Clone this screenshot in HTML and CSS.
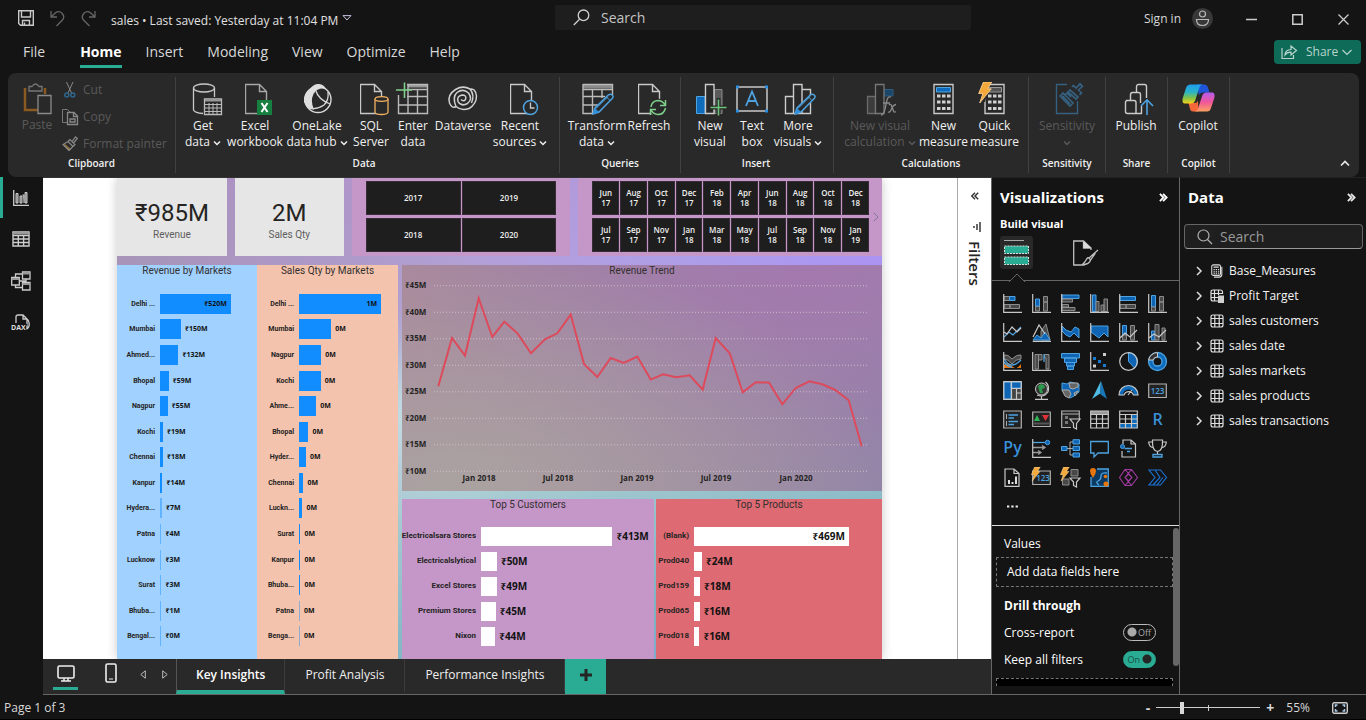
FILE: index.html
```html
<!DOCTYPE html>
<html lang="en">
<head>
<meta charset="utf-8">
<title>sales - Power BI Desktop</title>
<link rel="stylesheet" href="styles.css">
</head>
<body>
<svg class="defs" aria-hidden="true">
  <symbol id="chev" viewBox="0 0 8 6"><path d="M1 1.500 4 4.500 7 1.500" fill="none" stroke="currentColor" stroke-width="1.500"/></symbol>
  <symbol id="page" viewBox="0 0 32 32"><path d="M.5 1.500H14.500L21.500 8.500V30.500H.5ZM14.500 1.500V8.500H21.500" fill="none" stroke="#c8c8c8" stroke-width="1.400"/></symbol>
  <symbol id="pencil" viewBox="0 0 22 22"><path d="M1 21 3 15 16.500 1.800Q18.500 .5 20.200 2T20.200 5.500L7 19Z" fill="#292929" stroke="#4ea3e0" stroke-width="1.500"/><path d="M1 21 3 15 7 19Z" fill="#2e8fe0"/><path d="M14.500 4 18 7.500M4 15.500 16 3.500" stroke="#4ea3e0" fill="none"/></symbol>
  <symbol id="tbl" viewBox="0 0 14 14"><path d="M1 3Q1 1 3 1H11Q13 1 13 3V11Q13 13 11 13H3Q1 13 1 11ZM1 4.500H13M1 9.500H13M4.800 1V13M9.200 1V13" fill="none" stroke="#e0e0e0" stroke-width="1.200"/></symbol>
  <symbol id="dbl" viewBox="0 0 10 10"><path d="M1 1 5 5 1 9M4.500 1 8.500 5 4.500 9" fill="none" stroke="currentColor" stroke-width="2"/></symbol>
  <symbol id="bolt" viewBox="0 0 14 20"><path d="M5 0H13L9 6.500H12.500L1.500 20 4.500 11H.5Z" fill="#f5a83a" stroke="#ffd79a" stroke-width=".8"/></symbol>
</svg>

<header class="titlebar">
  <div class="quick">
    <button class="ic" aria-label="Save"><svg width="16" height="16" viewBox="0 0 16 16"><path d="M.7 .7H15.300V15.300H2.500L.7 13.500ZM3.500 .7V7H12.500V.7M4.500 15V10.500H11.500V15M6.500 12.500V15" fill="none" stroke="#c8c8c8" stroke-width="1.400"/></svg></button>
    <button class="ic" aria-label="Undo"><svg width="15" height="17" viewBox="0 0 15 17"><path d="M1 1V7H7M1.500 6.500 5.500 2.800Q9 .2 12 3.200 15.500 7 12 10.500L6.500 16" fill="none" stroke="#666" stroke-width="1.300"/></svg></button>
    <button class="ic" aria-label="Redo"><svg width="15" height="17" viewBox="0 0 15 17"><path d="M14 1V7H8M13.500 6.500 9.500 2.800Q6 .2 3 3.200-.5 7 3 10.500L8.500 16" fill="none" stroke="#666" stroke-width="1.300"/></svg></button>
    <span class="docname">sales • Last saved: Yesterday at 11:04 PM</span>
    <button class="ic" aria-label="File menu"><svg width="10" height="6" viewBox="0 0 10 6"><path d="M1 .6H9L5 5Z" fill="none" stroke="#c8bfe0"/></svg></button>
  </div>
  <label class="topsearch">
    <svg width="17" height="17" viewBox="0 0 17 17"><circle cx="10.500" cy="6.300" r="5.300" fill="none" stroke="#d0d0d0" stroke-width="1.300"/><path d="M6.500 10.300 .8 16" stroke="#d0d0d0" stroke-width="1.300"/></svg>
    <input type="search" placeholder="Search" aria-label="Search">
  </label>
  <div class="winctl">
    <a href="#" class="signin">Sign in</a>
    <span class="avatar"><svg width="21" height="21" viewBox="0 0 21 21"><circle cx="10.500" cy="10.500" r="10.500" fill="#383838"/><circle cx="10.500" cy="6" r="3" fill="none" stroke="#bbb" stroke-width="1.200"/><path d="M4.500 11.500H16.500Q16.500 17.500 10.500 17.500T4.500 11.500Z" fill="none" stroke="#bbb" stroke-width="1.200"/></svg></span>
    <button class="win" aria-label="Minimize"><svg width="11" height="11"><path d="M0 5.500H11" stroke="#ccc" stroke-width="1.500"/></svg></button>
    <button class="win" aria-label="Maximize"><svg width="11" height="11"><path d="M.8 .8H10.200V10.200H.8Z" fill="none" stroke="#ccc" stroke-width="1.500"/></svg></button>
    <button class="win" aria-label="Close"><svg width="11" height="11"><path d="M.5 .5 10.500 10.500M10.500 .5 .5 10.500" stroke="#ccc" stroke-width="1.300"/></svg></button>
  </div>
</header>

<nav class="menu">
  <button class="file">File</button>
  <button class="on">Home</button>
  <button>Insert</button>
  <button>Modeling</button>
  <button>View</button>
  <button>Optimize</button>
  <button>Help</button>
  <button class="share"><svg width="17" height="16" viewBox="0 0 17 16"><path d="M1 4V14.500H12.500V11M4 11Q4 6 10 5.500V2L15.500 6.500 10 11V8.200Q6 8 4 11Z" fill="none" stroke="#b8d4cc" stroke-width="1.200"/></svg>Share<svg width="10" height="7" viewBox="0 0 10 7"><path d="M.5 1 5 5.500 9.500 1" fill="none" stroke="#b8d4cc" stroke-width="1.200"/></svg></button>
</nav>

<section class="ribbon" aria-label="Ribbon">
  <div class="group clip">
    <div class="tools">
      <button class="tool w42" disabled><svg viewBox="0 0 32 32"><path d="M4 6V28H18" fill="none" stroke="#8a5a20" stroke-width="2.500"/><path d="M24 6V12" stroke="#8a5a20" stroke-width="2.500"/><path d="M8 9V4.500H11Q14.500-.5 18 4.500H21V9Z" fill="#292929" stroke="#777" stroke-width="1.300"/><path d="M17 13.500H30V31.500H17Z" fill="#292929" stroke="#8a8a8a" stroke-width="1.300"/></svg><span>Paste</span></button>
      <div class="minis">
        <button class="mini" disabled><svg viewBox="0 0 16 16"><path d="M4.500 0 9.500 11M11 0 6 11" stroke="#888" fill="none"/><circle cx="4.800" cy="13" r="2" fill="none" stroke="#2f6690" stroke-width="1.500"/><circle cx="10.800" cy="13" r="2" fill="none" stroke="#2f6690" stroke-width="1.500"/></svg>Cut</button>
        <button class="mini" disabled><svg viewBox="0 0 16 16"><path d="M5 13.500H.5V.5H5.500L8 3" fill="none" stroke="#777"/><path d="M5.500 3.500H12L15.500 7V15.500H5.500ZM11.500 3.500V7.500H15.500M8 10H13V13H8Z" fill="none" stroke="#888" stroke-width="1.300"/></svg>Copy</button>
        <button class="mini" disabled><svg viewBox="0 0 16 16"><path d="M1 9 7 15 9 13 3 8Z" fill="#8a6a35"/><path d="M1 8.500 7 14.500 11 10.500 6 5.500ZM6 5.500 8 3.500 13 8.500 11 10.500M10 5.500 13.500 .8 15.300 2.500 11.500 7" fill="none" stroke="#888" stroke-width="1.200"/></svg>Format painter</button>
      </div>
    </div>
    <h2>Clipboard</h2>
  </div>

  <div class="group data">
    <div class="tools">
      <button class="tool w42"><svg viewBox="0 0 32 32"><ellipse cx="17" cy="5" rx="10.500" ry="4" fill="none" stroke="#c8c8c8" stroke-width="1.300"/><path d="M6.500 5V27Q8 30 16 30.500M27.500 5V14" fill="none" stroke="#c8c8c8" stroke-width="1.300"/><path d="M17.500 16H34.500V31.500H17.500Z" fill="#292929" stroke="#bbb" stroke-width="1.300"/><path d="M18 17.500H34" stroke="#999" stroke-width="2"/><path d="M18 21.500H34M18 25H34M18 28.500H34M22 20V31M26 20V31M30 20V31" stroke="#bbb"/></svg><span>Get<br>data <svg class="cv"><use href="#chev"/></svg></span></button>
      <button class="tool w62"><svg viewBox="0 0 32 32"><use href="#page" x="6" width="32" height="32" opacity=".8"/><path d="M18 17H33V32H18Z" fill="#15803f"/><path d="M22.500 20 28.500 29M28.500 20 22.500 29" stroke="#fff" stroke-width="2"/></svg><span>Excel<br>workbook</span></button>
      <button class="tool w62"><svg viewBox="0 0 32 32"><circle cx="17" cy="16.500" r="13" fill="none" stroke="#d8d8d8" stroke-width="1.400"/><path d="M9 6Q13 .5 18 1 23 1.500 25 6 17 4 12.500 11 9 18 13 26.500 6 27 3 19 2 11 9 6Z" fill="#dedede"/><path d="M15 8Q17 16 29 21M6 24Q14 28 23 22 28 17 27 9" fill="none" stroke="#d8d8d8" stroke-width="1.300"/></svg><span>OneLake<br>data hub <svg class="cv"><use href="#chev"/></svg></span></button>
      <button class="tool w46"><svg viewBox="0 0 32 32"><use href="#page" x="5" width="32" height="32"/><path d="M20 16V29.500Q21 31.500 26.500 31.500T33 29.500V16" fill="#292929" stroke="#f0b060" stroke-width="1.300"/><ellipse cx="26.500" cy="16" rx="6.500" ry="2.300" fill="#292929" stroke="#f0b060" stroke-width="1.300"/></svg><span>SQL<br>Server</span></button>
      <button class="tool w38"><svg viewBox="0 0 32 32"><path d="M11 3H31" stroke="#999" stroke-width="3"/><path d="M10 1.500H30.500V30.500H1.500V12M11 1.500V30.500M20.500 6V30.500M10 6.500H30.500M10 13.500H30.500M1.500 22H30.500" fill="none" stroke="#bbb" stroke-width="1.400"/><path d="M7.500-.5V15M-1 7H15" stroke="#7fd08a" stroke-width="1.600"/></svg><span>Enter<br>data</span></button>
      <button class="tool w62"><svg viewBox="0 0 32 32"><path d="M23 6Q16 2 8.500 6.500 0 12 2.500 20 5 26 9 23.500M9 23.500Q5 14 10 9.500 16 5 21.500 10 26 16 20.500 20.500 14 24 11 18.500 9.500 13 15 12 20 12 18.500 16.500 16.500 19 14 16.500M9 23.500Q14 28 22 25.500 29.500 21 29.500 13 28.500 5 23 6 28 12 24.500 20" fill="none" stroke="#d0d0d0" stroke-width="1.500"/></svg><span>Dataverse</span></button>
      <button class="tool w52"><svg viewBox="0 0 32 32"><use href="#page" x="6" width="32" height="32"/><circle cx="26.500" cy="24.500" r="7" fill="#292929" stroke="#4ea3e0" stroke-width="1.500"/><path d="M26.500 19.500V25H30.500" fill="none" stroke="#ccc" stroke-width="1.300"/></svg><span>Recent<br>sources <svg class="cv"><use href="#chev"/></svg></span></button>
    </div>
    <h2>Data</h2>
  </div>

  <div class="group queries">
    <div class="tools">
      <button class="tool w58"><svg viewBox="0 0 32 32"><path d="M2 3.500H31" stroke="#888" stroke-width="4"/><path d="M2 1.500H31.500V12M2 1V30.500H12M2 6.500H31M2 13.500H24M2 22H17M11.500 6V30M21 6V15" fill="none" stroke="#bbb" stroke-width="1.400"/><use href="#pencil" x="11" y="10" width="22" height="22"/></svg><span>Transform<br>data <svg class="cv"><use href="#chev"/></svg></span></button>
      <button class="tool w46"><svg viewBox="0 0 32 32"><use href="#page" x="5" width="32" height="32"/><circle cx="25" cy="24.500" r="9" fill="#292929"/><path d="M18 24Q19 17.500 25.500 17.500 30 18 32 22M32.500 17V22.500H27M32.500 25Q31 31.500 25 31.500 20 31 18 27M17.500 32V26.500H23" fill="none" stroke="#7fd08a" stroke-width="1.500"/></svg><span>Refresh</span></button>
    </div>
    <h2>Queries</h2>
  </div>

  <div class="group insert">
    <div class="tools">
      <button class="tool w38"><svg viewBox="0 0 32 32"><path d="M2.500 13.500H11V30.500H2.500Z" fill="#0f6cbd" stroke="#4ea3e0"/><path d="M20.500 6.500H28V30.500H20.500Z" fill="#5a5a5a" stroke="#8a8a8a"/><path d="M11.500 1.500H20V30.500H11.500Z" fill="#292929" stroke="#ccc" stroke-width="1.400"/><path d="M24.500 15V33M16 24.500H33" stroke="#292929" stroke-width="4"/><path d="M24.500 16.500V32.500M16.500 24.500H32.500" stroke="#6cc47a" stroke-width="1.600"/></svg><span>New<br>visual</span></button>
      <button class="tool w46"><svg viewBox="0 0 32 32"><path d="M1 4H31V28H1Z" fill="none" stroke="#c8c8c8" stroke-width="1.500"/><path d="M0 2.500H3V5.500H0ZM29 2.500H32V5.500H29ZM0 26.500H3V29.500H0ZM29 26.500H32V29.500H29Z" fill="#2e8fe0"/><path d="M10 23 16 8.500 22 23M12.300 18H19.700" fill="none" stroke="#4ea3e0" stroke-width="1.800"/></svg><span>Text<br>box</span></button>
      <button class="tool w46"><svg viewBox="0 0 32 32"><path d="M3.500 13.500H11.500V30.500H3.500ZM11.500 1.500H20V30.500H11.500ZM20 6.500H28.500V30.500H20" fill="none" stroke="#ccc" stroke-width="1.400"/><use href="#pencil" x="12" y="10" width="22" height="22"/></svg><span>More<br>visuals <svg class="cv"><use href="#chev"/></svg></span></button>
    </div>
    <h2>Insert</h2>
  </div>

  <div class="group calc">
    <div class="tools">
      <button class="tool w76" disabled><svg viewBox="0 0 32 32"><path d="M3.500 13.500H11.500V30.500H3.500Z" fill="#3c3c3c" stroke="#6a6a6a" stroke-width="1.300"/><path d="M20 6.500H29V13H20Z" fill="#1c4668" stroke="#2b5c84"/><path d="M11.500 1.500H20V30.500H11.500Z" fill="#292929" stroke="#777" stroke-width="1.300"/><path d="M17 32Q20 32 21 26L23 17Q24 13 27 14M19 20H26M25 22Q27 20 28 24L29.500 28Q30 30 32 28.500M32 21.500Q29 22 27.500 26T24 29" fill="none" stroke="#8a8a8a" stroke-width="1.300"/></svg><span>New visual<br>calculation <svg class="cv"><use href="#chev"/></svg></span></button>
      <button class="tool w51"><svg viewBox="0 0 32 32"><g id="calcico"><path d="M6 1.500H25V30.500H6Z" fill="#292929" stroke="#c8c8c8" stroke-width="1.400"/><path d="M9 11.500H12.500V14.500H9ZM14 11.500H17.500V14.500H14ZM19 11.500H22.500V14.500H19ZM9 17.500H12.500V20.500H9ZM14 17.500H17.500V20.500H14ZM19 17.500H22.500V20.500H19ZM9 24H12.500V27H9ZM14 24H17.500V27H14ZM19 24H22.500V27H19Z" fill="#d0d0d0"/></g><path d="M8.500 4.500H22.500V9H8.500Z" fill="#0f6cbd" stroke="#4ea3e0"/></svg><span>New<br>measure</span></button>
      <button class="tool w51"><svg viewBox="0 0 32 32"><use href="#calcico"/><path d="M8.500 4.500H22.500V9H8.500Z" fill="#555" stroke="#999"/><path d="M0 0H11L6 19H0Z" fill="#292929"/><use href="#bolt" x="-1" y="-1" width="15" height="21"/></svg><span>Quick<br>measure</span></button>
    </div>
    <h2>Calculations</h2>
  </div>

  <div class="group sens">
    <div class="tools">
      <button class="tool w76" disabled><svg viewBox="0 0 32 32"><path d="M16 1.500H5.500V30.500H26.500V18" fill="none" stroke="#35607f" stroke-width="1.400"/><path d="M9 13 12 10 22 20 19 23ZM11 15 13 13M14 12 16 10 20 14M17 9 19 7 27 14 25 16ZM21 4 22.500 2.500 25 5 29 .8 31.500 3.300 27.500 7 30.500 10 28.500 12" fill="none" stroke="#35607f" stroke-width="1.700"/><path d="M11 13 19 21" stroke="#35607f" stroke-width="2"/></svg><span>Sensitivity<br><svg class="cv"><use href="#chev"/></svg></span></button>
    </div>
    <h2>Sensitivity</h2>
  </div>

  <div class="group pub">
    <div class="tools">
      <button class="tool w60"><svg viewBox="0 0 32 32"><path d="M6 17.500H14Q16 17.500 16 19.500V30.500H7.500Q5.500 30.500 5.500 28.500V19.500Q5.500 17.500 7.500 17.500M10.500 17V12Q10.500 9.500 12.500 9.500H18.500Q20.500 9.500 20.500 11.500V20M16.500 9V4Q16.500 1.500 18.500 1.500H24.500Q26.500 1.500 26.500 3.500V15M16 30.500H22M21.500 23V30.500" fill="none" stroke="#ccc" stroke-width="1.400"/><path d="M27 32V17M21 23 27 16.800 33 23" fill="none" stroke="#4ea3e0" stroke-width="1.600"/></svg><span>Publish</span></button>
    </div>
    <h2>Share</h2>
  </div>

  <div class="group cop">
    <div class="tools">
      <button class="tool w60"><svg viewBox="0 0 32 32">
        <defs>
          <linearGradient id="ga" x1="0" y1="0" x2="0" y2="1"><stop offset="0" stop-color="#1f9cf0"/><stop offset=".4" stop-color="#2ab5c8"/><stop offset=".7" stop-color="#7fc24a"/><stop offset="1" stop-color="#f5d11a"/></linearGradient>
          <linearGradient id="gb" x1="0" y1="0" x2="0" y2="1"><stop offset="0" stop-color="#b45cf0"/><stop offset=".5" stop-color="#f0569a"/><stop offset="1" stop-color="#fba060"/></linearGradient>
        </defs>
        <path d="M15 1.500H22Q25 1.500 26 4.500L27.500 9.500H21Q18 9.500 17 12.500Z" fill="#1f55d8"/>
        <path d="M16.500 28.500H11Q8.500 28.500 8 26L6.500 20H12Q15 20.500 16 17.500Z" fill="#f5683a"/>
        <path d="M8.500 1.500H21Q18 2 17 5.500L13 18Q12 20.500 9 20.500H3Q-.5 20.500 .8 15L4 5Q5 1.500 8.500 1.500Z" fill="url(#ga)"/>
        <path d="M25 28.500H12.500Q15.500 28 16.500 24L20.500 12Q21.500 9.500 24 9.500H30Q33.500 9.500 32.300 15L29 25Q28 28.500 25 28.500Z" fill="url(#gb)"/></svg><span>Copilot</span></button>
    </div>
    <h2>Copilot</h2>
  </div>
  <button class="collapse" aria-label="Collapse ribbon"><svg width="10" height="7" viewBox="0 0 10 7"><path d="M1 5.500 5 1.500 9 5.500" fill="none" stroke="#e8e8e8" stroke-width="1.700"/></svg></button>
</section>

<main class="work">
  <nav class="rail" aria-label="Views">
    <button class="on" aria-label="Report view"><svg width="16" height="16" viewBox="0 0 16 16"><path d="M.7 0V15.300H16" fill="none" stroke="#ccc" stroke-width="1.300"/><path d="M3 3.500H5V13H3ZM7 6H9V13H7ZM9.500 5H11V13M12 2.500H14V13H12Z" fill="#777" stroke="#ccc"/></svg></button>
    <button aria-label="Table view"><svg width="18" height="16" viewBox="0 0 18 16"><path d="M1 1H17V15H1ZM1 4.500H17M1 8H17M1 11.500H17M6.300 4.500V15M11.600 4.500V15" fill="none" stroke="#ccc" stroke-width="1.400"/><path d="M1 2.500H17" stroke="#999" stroke-width="2"/></svg></button>
    <button aria-label="Model view"><svg width="20" height="20" viewBox="0 0 20 20"><path d="M.7 6.500H8.300V14H.7ZM11.500 1H19V8H11.500ZM11.500 11.500H19V19H11.500ZM4.500 6.500V3H11.500M4.500 14V16.500H11.500M8.300 10H15V8" fill="none" stroke="#ccc" stroke-width="1.300"/><path d="M.7 8H8.300M11.500 2.500H19M11.500 13H19" stroke="#999" stroke-width="2"/></svg></button>
    <button aria-label="DAX query view"><svg width="20" height="20" viewBox="0 0 20 20"><path d="M5 10V4Q5 2 7 2H12L16 6V15M12 2V6H16M15 5Q19 8 18 13 17 16 15 16" fill="none" stroke="#ccc" stroke-width="1.300"/><text class="dax" x="0" y="17">DAX</text></svg></button>
  </nav>

  <div class="center">
    <div class="stage">
      <div class="canvaswrap">
        <article class="report">
          <div class="toprow">
            <div class="card"><strong>₹985M</strong><span>Revenue</span></div>
            <div class="card"><strong>2M</strong><span>Sales Qty</span></div>
            <div class="slicer years">
              <button>2017</button><button>2019</button><button>2018</button><button>2020</button>
            </div>
            <div class="slicer months">
              <button>Jun<br>17</button><button>Aug<br>17</button><button>Oct<br>17</button><button>Dec<br>17</button><button>Feb<br>18</button><button>Apr<br>18</button><button>Jun<br>18</button><button>Aug<br>18</button><button>Oct<br>18</button><button>Dec<br>18</button>
              <button>Jul<br>17</button><button>Sep<br>17</button><button>Nov<br>17</button><button>Jan<br>18</button><button>Mar<br>18</button><button>May<br>18</button><button>Jul<br>18</button><button>Sep<br>18</button><button>Nov<br>18</button><button>Jan<br>19</button>
              <svg class="next" width="6" height="10" viewBox="0 0 6 10"><path d="M.7 .7 5 5 .7 9.300" fill="none" stroke="#86749c"/></svg>
            </div>
          </div>

          <div class="visuals">
            <section class="bars rev">
              <h3>Revenue by Markets</h3>
              <ul>
                <li><b>Delhi ...</b><i style="width:73%"><em>₹520M</em></i></li>
                <li><b>Mumbai</b><i style="width:21.600%"></i><em>₹150M</em></li>
                <li><b>Ahmed...</b><i style="width:19%"></i><em>₹132M</em></li>
                <li><b>Bhopal</b><i style="width:9%"></i><em>₹59M</em></li>
                <li><b>Nagpur</b><i style="width:8%"></i><em>₹55M</em></li>
                <li><b>Kochi</b><i style="width:3%"></i><em>₹19M</em></li>
                <li><b>Chennai</b><i style="width:3%"></i><em>₹18M</em></li>
                <li><b>Kanpur</b><i style="width:2.500%"></i><em>₹14M</em></li>
                <li class="faint"><b>Hydera...</b><i style="width:2%"></i><em>₹7M</em></li>
                <li class="faint"><b>Patna</b><i style="width:1.500%"></i><em>₹4M</em></li>
                <li class="faint"><b>Lucknow</b><i style="width:1.500%"></i><em>₹3M</em></li>
                <li class="faint"><b>Surat</b><i style="width:1.500%"></i><em>₹3M</em></li>
                <li class="faint"><b>Bhuba...</b><i style="width:1.500%"></i><em>₹1M</em></li>
                <li class="faint"><b>Bengal...</b><i style="width:1.500%"></i><em>₹0M</em></li>
              </ul>
            </section>
            <section class="bars qty">
              <h3>Sales Qty by Markets</h3>
              <ul>
                <li><b>Delhi ...</b><i style="width:83%"><em>1M</em></i></li>
                <li><b>Mumbai</b><i style="width:32.500%"></i><em>0M</em></li>
                <li><b>Nagpur</b><i style="width:22.500%"></i><em>0M</em></li>
                <li><b>Kochi</b><i style="width:22%"></i><em>0M</em></li>
                <li><b>Ahme...</b><i style="width:17.500%"></i><em>0M</em></li>
                <li><b>Bhopal</b><i style="width:9.500%"></i><em>0M</em></li>
                <li><b>Hyder...</b><i style="width:7%"></i><em>0M</em></li>
                <li><b>Chennai</b><i style="width:4.500%"></i><em>0M</em></li>
                <li><b>Luckn...</b><i style="width:3.500%"></i><em>0M</em></li>
                <li><b>Surat</b><i style="width:1.500%"></i><em>0M</em></li>
                <li><b>Kanpur</b><i style="width:1.500%"></i><em>0M</em></li>
                <li><b>Bhuba...</b><i style="width:1.500%"></i><em>0M</em></li>
                <li class="faint"><b>Patna</b><i style="width:1%"></i><em>0M</em></li>
                <li class="faint"><b>Benga...</b><i style="width:1%"></i><em>0M</em></li>
              </ul>
            </section>
            <div class="rightcol">
              <section class="trend">
                <svg viewBox="0 0 480 225" role="img" aria-label="Revenue Trend">
                  <text class="ttl" x="240" y="9" text-anchor="middle">Revenue Trend</text>
                  <path class="grid" d="M32 20.500H466M32 47H466M32 73.500H466M32 100H466M32 126.500H466M32 153H466M32 179.500H466M32 206H466"/>
                  <g class="ax">
                    <text x="3" y="23">₹45M</text><text x="3" y="50">₹40M</text><text x="3" y="76">₹35M</text><text x="3" y="103">₹30M</text><text x="3" y="129">₹25M</text><text x="3" y="156">₹20M</text><text x="3" y="182">₹15M</text><text x="3" y="209">₹10M</text>
                  </g>
                  <g class="ax" text-anchor="middle">
                    <text x="77" y="216">Jan 2018</text><text x="156" y="216">Jul 2018</text><text x="235" y="216">Jan 2019</text><text x="314" y="216">Jul 2019</text><text x="394" y="216">Jan 2020</text>
                  </g>
                  <polyline class="line" points="36.300,121 50,72.700 63,90.300 76.700,33 90.300,71.700 102.300,56.300 115.700,68.300 129,88 143,74 155.300,68 168.700,49.300 182,98.700 195.300,111.700 208.700,92.700 221.700,97.700 235.300,91.300 248.700,114.300 261,109 274.300,112 287.700,110 300.700,124.300 313.700,72.700 327.700,88 340.700,127 353.700,117 367,117.300 380.300,139 393.700,122.700 407.300,116 420.300,119 433.300,124.700 446.700,135 459.700,181"/>
                </svg>
              </section>
              <section class="bars cust">
                <h3>Top 5 Customers</h3>
                <ul>
                  <li><b>Electricalsara Stores</b><i style="width:76%"></i><em>₹413M</em></li>
                  <li><b>Electricalslytical</b><i style="width:9.200%"></i><em>₹50M</em></li>
                  <li><b>Excel Stores</b><i style="width:9%"></i><em>₹49M</em></li>
                  <li><b>Premium Stores</b><i style="width:8.500%"></i><em>₹45M</em></li>
                  <li><b>Nixon</b><i style="width:8.200%"></i><em>₹44M</em></li>
                </ul>
              </section>
              <section class="bars prod">
                <h3>Top 5 Products</h3>
                <ul>
                  <li><b>(Blank)</b><i style="width:82.400%"><em>₹469M</em></i></li>
                  <li><b>Prod040</b><i style="width:4.300%"></i><em>₹24M</em></li>
                  <li><b>Prod159</b><i style="width:3.200%"></i><em>₹18M</em></li>
                  <li><b>Prod065</b><i style="width:3%"></i><em>₹16M</em></li>
                  <li><b>Prod018</b><i style="width:2.900%"></i><em>₹16M</em></li>
                </ul>
              </section>
            </div>
          </div>
        </article>
      </div>
      <aside class="filters">
        <button aria-label="Expand filters"><svg width="8" height="8" viewBox="0 0 10 10"><path d="M5 1 1 5 5 9M9 1 5 5 9 9" fill="none" stroke="#333" stroke-width="1.800"/></svg></button>
        <svg width="9" height="10" viewBox="0 0 9 10"><path d="M8 0V10M5 2V8M2 4V6" stroke="#444" stroke-width="1.600"/></svg>
        <h2>Filters</h2>
      </aside>
    </div>
    <footer class="pages">
      <button class="dev on" aria-label="Desktop layout"><svg width="18" height="17" viewBox="0 0 18 17"><rect x="1" y="1" width="16" height="12" rx="1.500" fill="none" stroke="#eee" stroke-width="1.600"/><path d="M4 16H14M7 13V16M11 13V16" stroke="#eee" stroke-width="1.500"/></svg></button>
      <button class="dev" aria-label="Mobile layout"><svg width="12" height="20" viewBox="0 0 12 20"><rect x="1" y="1" width="10" height="18" rx="1.500" fill="none" stroke="#eee" stroke-width="1.600"/><path d="M4 16H8" stroke="#eee"/></svg></button>
      <button class="arr" aria-label="Previous page"><svg width="6" height="9" viewBox="0 0 6 9"><path d="M5.300 .8V8.200L.8 4.500Z" fill="none" stroke="#bbb"/></svg></button>
      <button class="arr" aria-label="Next page"><svg width="6" height="9" viewBox="0 0 6 9"><path d="M.7 .8V8.200L5.200 4.500Z" fill="none" stroke="#bbb"/></svg></button>
      <button class="pg on">Key Insights</button>
      <button class="pg">Profit Analysis</button>
      <button class="pg">Performance Insights</button>
      <button class="add" aria-label="New page"><svg width="12" height="12"><path d="M6 0V12M0 6H12" stroke="#252525" stroke-width="3"/></svg></button>
    </footer>
  </div>

  <aside class="viz">
    <div class="vhead"><h2>Visualizations</h2><button aria-label="Collapse"><svg width="9" height="9"><use href="#dbl"/></svg></button></div>
    <h3>Build visual</h3>
    <div class="vtabs">
      <button class="on" aria-label="Build visual"><svg width="33" height="33" viewBox="0 0 33 33"><path d="M4 4.500H24" stroke="#aaa"/><path d="M4.500 10H28.500V17.500H4.500ZM4.500 21H28.500V28.500H4.500Z" fill="#2aac94" stroke="#ddd" stroke-dasharray="2 1"/></svg></button>
      <button aria-label="Format visual"><svg width="26" height="26" viewBox="0 0 26 26"><path d="M12 25H.7V1H10.500L18 8V10M10.500 1V8H18M25 10 15.500 18.500M22.500 13 17.500 20Q16.500 24.500 9.500 24.500 12.500 21.500 14 18.500Q15.500 16.500 17.500 20" fill="none" stroke="#c0c0c0" stroke-width="1.300"/><path d="M10.500 1V8H18Z" fill="#ddd"/></svg></button>
    </div>
    <div class="notch"><svg width="16" height="9" viewBox="0 0 16 9"><path d="M0 9 8 1 16 9" fill="#141414" stroke="#666"/></svg></div>
    <div class="vgrid">
      <button aria-label="Stacked bar chart"><svg><path class="g" d="M1 2.500H6.500V6.500H1Z"/><path class="b" d="M6.500 2.500H12V6.500H6.500Z"/><path class="g" d="M1 10.500H7V14.500H1ZM7 10.500H16.500V14.500H7Z"/><path class="a" d="M.7 0V18.300H19"/></svg></button>
      <button aria-label="Stacked column chart"><svg><path class="g" d="M11.500 2.500H15.500V8H11.500ZM11.500 8H15.500V17H11.500ZM3.500 12H7.500V17H3.500Z"/><path class="b" d="M3.500 5H7.500V12H3.500Z"/><path class="a" d="M.7 0V18.300H19"/></svg></button>
      <button aria-label="Clustered bar chart"><svg><path class="b" d="M1 1H18V4.500H1Z"/><path class="g" d="M1 5H11.500V8H1ZM1 10.500H7.500V13H1ZM1 13.500H14V16.500H1Z"/><path class="a" d="M.7 0V18.300H19"/></svg></button>
      <button aria-label="Clustered column chart"><svg><path class="b" d="M2.500 1H6V17.500H2.500Z"/><path class="g" d="M6 7.500H9V17.500H6ZM11 11H14V17.500H11ZM14 5H17.500V17.500H14Z"/><path class="a" d="M.7 0V18.300H19"/></svg></button>
      <button aria-label="100% stacked bar chart"><svg><path class="b" d="M1 2.500H16.500V6.500H1Z"/><path class="g" d="M1 10.500H7V14.500H1ZM7 10.500H16.500V14.500H7Z"/><path class="a" d="M.7 0V18.300H19"/></svg></button>
      <button aria-label="100% stacked column chart"><svg><path class="b" d="M3.500 1.500H7.500V13H3.500Z"/><path class="g" d="M3.500 13H7.500V17H3.500ZM11.500 2.500H15.500V8H11.500ZM11.500 8H15.500V17H11.500Z"/><path class="a" d="M.7 0V18.300H19"/></svg></button>

      <button aria-label="Line chart"><svg><path class="bl" d="M1 14 6 9 10 12 18 4"/><path class="a" d="M1 9 4 11 9 4 14 9 18 5M.7 0V18.300H19"/></svg></button>
      <button aria-label="Area chart"><svg><path class="g" d="M9 8 14 1 18 17H9Z"/><path class="b" d="M1 17 5 12 9 15 13 9 18 17Z"/><path class="a" d="M1 14 7 2 13 11M.7 18.300H19"/></svg></button>
      <button aria-label="Stacked area chart"><svg><path class="b" d="M1 3 5 7 10 9 14 4 18 6V15L13 10 9 14 5 12 1 8Z"/><path class="a" d="M.7 0V18.300H19"/></svg></button>
      <button aria-label="100% stacked area chart"><svg><path class="b" d="M1 3H18V14L14 10 9 15 5 12 1 9Z"/><path class="a" d="M.7 0V18.300H19"/></svg></button>
      <button aria-label="Line and stacked column chart"><svg><path class="b" d="M3.500 2.500H7.500V12H3.500Z"/><path class="g" d="M3.500 12H7.500V17H3.500ZM11.500 2.500H15.500V17H11.500Z"/><path class="a" d="M1 15 6 10 11 14 18 7M.7 0V18.300H19"/></svg></button>
      <button aria-label="Line and clustered column chart"><svg><path class="b" d="M3.500 8H7V17H3.500Z"/><path class="g" d="M7 1.500H11V17H7ZM14 5H17V17H14Z"/><path class="a" d="M1 15 6 11 11 14 18 7M.7 0V18.300H19"/></svg></button>

      <button aria-label="Ribbon chart"><svg><path d="M1 13Q5 9 9 14T18 12V16H1Z" fill="#e8760c"/><path class="g" d="M1 3Q5 2 9 7 14 2 18 3V7Q13 7 9 12 5 7 1 7Z"/><path class="bl" d="M1 7Q5 13 9 13T18 8M1 10Q5 15 9 15"/><path class="a" d="M.7 0V18.300H19"/></svg></button>
      <button aria-label="Waterfall chart"><svg><path class="g" d="M3 2.500H6.500V17H3ZM6.500 2.500H10V8H6.500ZM12.500 2.500H17V17H14V6H12.500Z"/><path class="bl" d="M12 2V10"/><path class="a" d="M.7 0V18.300H19"/></svg></button>
      <button aria-label="Funnel"><svg><path class="b" d="M.5 1.500H18.500V6H.5ZM3.500 6H15.500V10.500H3.500ZM5.500 10.500H13.500V14H5.500ZM6.500 14H12.500V17.500H6.500Z"/></svg></button>
      <button aria-label="Scatter chart"><svg><path d="M3 5H6V8H3ZM8 8H11V11H8ZM13 12H16V15H13Z" fill="#1a7ad0"/><path d="M13 1H16V4H13ZM3 12.500H6V15.500H3Z" fill="#ccc"/><path class="a" d="M.7 0V18.300H19"/></svg></button>
      <button aria-label="Pie chart"><svg><path class="b" d="M9.500 .7A8.800 8.800 0 0 1 15.500 16L9.500 9.500Z"/><circle class="a" cx="9.500" cy="9.500" r="8.800"/></svg></button>
      <button aria-label="Donut chart"><svg><circle cx="9.500" cy="9.500" r="6.800" fill="none" stroke="#0f6cbd" stroke-width="4.500"/><circle class="bl" cx="9.500" cy="9.500" r="9"/><circle class="bl" cx="9.500" cy="9.500" r="4.500"/><path d="M.6 8A9 9 0 0 1 9.500 .6V5A4.500 4.500 0 0 0 5 8Z" fill="#333" stroke="#ccc"/></svg></button>

      <button aria-label="Treemap"><svg><path class="b" d="M1 1H8V18H1ZM8 1H18V7H8Z"/><path d="M9 8H18V18H9Z" fill="#444"/><path class="a" d="M.7 .7H18.300V18.300H.7ZM8.500 1V18M8.500 7.500H18M13.500 7.500V18M13.500 12H18"/></svg></button>
      <button aria-label="Map"><svg><circle cx="9.500" cy="8" r="6" fill="#333" stroke="#ccc"/><path d="M6 5 9 3 12 4 13 7 10 8 11 12 8 12 7 9Z" fill="#2c9a4c"/><path class="a" d="M13.500 1Q18 5 16 11 12 17 5 14M9.500 15V18M3 18.300H16"/></svg></button>
      <button aria-label="Filled map"><svg><path class="b" d="M1 2 6 3 9 1 18 3 18 11 13 15 9 17 4 14 1 9Z"/><path d="M8 2 17 2 17 6 12 8 9 7ZM1 9 8 9 10 13 8 17 4 15ZM13 12 17 10 14 15Z" fill="#666" stroke="#aaa"/></svg></button>
      <button aria-label="Azure map"><svg><path d="M11 0 17 18 10 13Z" fill="#1976b8"/><path d="M11 0 2 18 10 12.500Z" fill="#50bce6"/></svg></button>
      <button aria-label="Gauge"><svg><path d="M2 14A7.500 7.500 0 0 1 17 14" fill="none" stroke="#0f6cbd" stroke-width="4"/><path class="a" d="M0 14A9.500 9.500 0 0 1 19 14H14.500A5 5 0 0 0 5 14ZM9 14 13 9"/></svg></button>
      <button aria-label="Card"><svg><path class="fr" d="M.7 3H18.300V16.500H.7Z"/><text class="num" x="9.500" y="13" text-anchor="middle">123</text></svg></button>

      <button aria-label="Multi-row card"><svg><path class="fr" d="M.7 1H18.300V18H.7Z"/><path d="M3.500 4V9M3.500 11V16" stroke="#aaa"/><path class="bl" d="M5.500 5H15M5.500 8H11M5.500 11.500H15M5.500 14.500H11"/></svg></button>
      <button aria-label="KPI"><svg><path class="fr" d="M.7 2H18.300V16.500H.7Z"/><path d="M2 11 5 5 8 11Z" fill="#2fb457"/><path d="M10 5H17L13.500 11Z" fill="#e0303a"/><path d="M2 13.500H17" stroke="#555" stroke-width="2"/></svg></button>
      <button aria-label="Slicer"><svg><path class="fr" d="M10 17.500H.7V1H18.300V9M.7 4H18"/><path d="M4 6H7V9H4ZM4 11H7V14H4Z" fill="#777"/><path class="a" d="M9 9H19L15.500 13.500V19L12.500 17.500V13.500Z"/></svg></button>
      <button aria-label="Table"><svg><path d="M1 2.500H18" stroke="#999" stroke-width="3"/><path class="a" d="M.7 1H18.300V18H.7ZM1 4.500H18M1 9H18M1 13.500H18M6.500 4.500V18M12.500 4.500V18"/></svg></button>
      <button aria-label="Matrix"><svg><path d="M12.500 4.500H18V18H1V13.500H12.500Z" fill="#0f6cbd"/><path class="a" d="M.7 1H18.300V18H.7ZM1 4.500H18M1 9H18M1 13.500H18M6.500 4.500V18M12.500 4.500V18"/></svg></button>
      <button aria-label="R visual"><svg><text class="let" x="9.500" y="15" text-anchor="middle">R</text></svg></button>

      <button aria-label="Python visual"><svg><text class="let" x="9.500" y="14" text-anchor="middle">Py</text></svg></button>
      <button aria-label="Key influencers"><svg><path class="bl" d="M1 3.500H13"/><circle class="b" cx="15.500" cy="3.500" r="2.200"/><path d="M1 8.500H13M10 6.500 13 8.500 10 10.500M1 13.500H9M6 11.500 9 13.500 6 15.500" fill="none" stroke="#999" stroke-width="1.300"/><path class="a" d="M.7 0V18.300H19"/></svg></button>
      <button aria-label="Decomposition tree"><svg><path d="M5 9.500H12M9 3V16H12M9 3H12" fill="none" stroke="#aaa"/><path class="b" d="M.5 7.500H6V11.500H.5ZM12 .7H18.500V5H12ZM12 7.300H18.500V11.500H12ZM12 14H18.500V18H12Z"/></svg></button>
      <button aria-label="Q&amp;A"><svg><path class="bl" d="M.7 2.500H18.300V14H8L4 18V14H.7Z"/></svg></button>
      <button aria-label="Smart narrative"><svg><path class="a" d="M4 5V1H12L16.500 5V18H3V12M12 1V5H16.500"/><circle class="b" cx="3.500" cy="7.500" r="2"/><path class="bl" d="M5.500 9.500H13M8 12.500H11"/></svg></button>
      <button aria-label="Metrics"><svg><path class="a" d="M4.500 1H14.500Q15 12 9.500 12.500 4 12 4.500 1ZM4.500 3H.7Q1 8 5 8.500M14.500 3H18.300Q18 8 14 8.500M9.500 12.500V15"/><path class="bl" d="M5 18V15.500H14V18Z"/></svg></button>

      <button aria-label="Paginated report"><svg><path class="a" d="M2 1H11L16 5.500V18.300H2ZM11 1V5.500H16"/><path d="M5 12H7V16H5ZM8.500 14H10.500V16H8.500ZM12 8.500H14V16H12Z" fill="#ddd"/></svg></button>
      <button aria-label="Card (new)"><svg><path class="fr" d="M.7 3H18.300V16.500H.7Z"/><text class="num" x="11" y="13" text-anchor="middle">123</text><use href="#bolt" x="-1" y="-1" width="10" height="14"/></svg></button>
      <button aria-label="Slicer (new)"><svg><path class="g" d="M10 1.500H17V8H10ZM1.500 11H8V17H1.500Z"/><path class="a" d="M9 10H19L15.500 14V19L12.500 17.500V14Z"/><use href="#bolt" x="-1" y="-1" width="10" height="14"/></svg></button>
      <button aria-label="ArcGIS map"><svg><path d="M7 1H18.300V18.300H1V9" fill="#0d3a63" stroke="#4ea3e0" stroke-width="1.300"/><path class="bl" d="M17 5Q11 4 11 8T8 13 9 17"/><path d="M3 0Q6 0 6 3 6 6 3 10 0 6 0 3 0 0 3 0Z" fill="#e8760c"/><circle cx="15.500" cy="8.500" r="1.800" fill="#e8760c"/><circle cx="16" cy="16" r="2.500" fill="#e8760c"/></svg></button>
      <button aria-label="Power Apps"><svg><path d="M6 1.500H12.500L18.500 9.500 12.500 17.500H6L.5 9.500ZM6 9.500 9.500 6 13 9.500 9.500 13ZM6 1.500 13 9.500 6 17.500M12.500 1.500 6 9.500 12.500 17.500" fill="none" stroke="#a03aa0" stroke-width="1.100"/></svg></button>
      <button aria-label="Power Automate"><svg><path d="M1 2H12.500L18.500 9.500 12.500 17H1L7 9.500ZM7 2 12 9.500 5 17M9 17 15 9.500" fill="none" stroke="#1a6fd0" stroke-width="1.200"/></svg></button>
      <button aria-label="More visuals"><svg><path d="M4 9.500H6.300M8.300 9.500H10.600M12.600 9.500H14.900" stroke="#eee" stroke-width="2.200"/></svg></button>
    </div>
    <div class="wells">
      <h4>Values</h4>
      <div class="drop">Add data fields here</div>
      <h4 class="bold">Drill through</h4>
      <label class="sw"><span>Cross-report</span><input type="checkbox" aria-label="Cross-report"><span class="st">Off</span></label>
      <label class="sw"><span>Keep all filters</span><input type="checkbox" checked aria-label="Keep all filters"><span class="st">On</span></label>
      <div class="drop last"></div>
      <span class="scroll"></span>
    </div>
  </aside>

  <aside class="fields">
    <div class="vhead"><h2>Data</h2><button aria-label="Collapse"><svg width="9" height="9"><use href="#dbl"/></svg></button></div>
    <label class="fsearch"><svg width="16" height="16" viewBox="0 0 16 16"><circle cx="6.500" cy="6.500" r="5.500" fill="none" stroke="#b0b0b0" stroke-width="1.200"/><path d="M10.500 10.500 15 15" stroke="#b0b0b0" stroke-width="1.200"/></svg><input type="search" placeholder="Search" aria-label="Search fields"></label>
    <ul class="tree">
      <li><button><svg class="tc"><path d="M1 1 5 5 1 9"/></svg><svg class="ti" viewBox="0 0 14 16"><path d="M3 1H9Q11 1 11 3V11Q11 13 9 13H3Q1 13 1 11V3Q1 1 3 1ZM12.500 3V12Q12.500 15 9.500 15H3.500" fill="none" stroke="#e0e0e0" stroke-width="1.200"/><path d="M3 3.500H9M3 6.500H4.500M5.500 6.500H7M8 6.500H9.500M3 9H4.500M5.500 9H7M8 9H9.500M3 11.200H4.500M5.500 11.200H7M8 11.200H9.500" stroke="#e0e0e0" stroke-width="1.300"/></svg>Base_Measures</button></li>
      <li><button><svg class="tc"><path d="M1 1 5 5 1 9"/></svg><svg class="ti" viewBox="0 0 14 14"><path d="M8 12H3Q1 12 1 10V3Q1 1 3 1H10Q12.500 1 12.500 3V5M1 4.500H12.500M1 8.500H8M4.500 1V12M8.500 1V6" fill="none" stroke="#e0e0e0" stroke-width="1.200"/><path d="M8 6.500H14V14H8Z" fill="#d0d0d0"/></svg>Profit Target</button></li>
      <li><button><svg class="tc"><path d="M1 1 5 5 1 9"/></svg><svg class="ti"><use href="#tbl"/></svg>sales customers</button></li>
      <li><button><svg class="tc"><path d="M1 1 5 5 1 9"/></svg><svg class="ti"><use href="#tbl"/></svg>sales date</button></li>
      <li><button><svg class="tc"><path d="M1 1 5 5 1 9"/></svg><svg class="ti"><use href="#tbl"/></svg>sales markets</button></li>
      <li><button><svg class="tc"><path d="M1 1 5 5 1 9"/></svg><svg class="ti"><use href="#tbl"/></svg>sales products</button></li>
      <li><button><svg class="tc"><path d="M1 1 5 5 1 9"/></svg><svg class="ti"><use href="#tbl"/></svg>sales transactions</button></li>
    </ul>
  </aside>
</main>

<footer class="status">
  <span>Page 1 of 3</span>
  <div class="zoom">
    <button aria-label="Zoom out">-</button>
    <input type="range" min="0" max="100" value="24" aria-label="Zoom">
    <button aria-label="Zoom in">+</button>
    <span class="pct">55%</span>
    <button class="fit" aria-label="Fit to page"><svg width="16" height="12" viewBox="0 0 16 12"><rect x=".7" y=".7" width="14.600" height="10.600" rx="1.500" fill="none" stroke="#ccc" stroke-width="1.400"/><path d="M3.500 5V3H5.500M10.500 3H12.500V5M12.500 7V9H10.500M5.500 9H3.500V7" fill="none" stroke="#a9c8e8" stroke-width="1.500"/></svg></button>
  </div>
</footer>
</body>
</html>
```
FILE: styles.css
```css
* { box-sizing: border-box; }
body {
  margin: 0;
  height: 100vh;
  display: flex;
  flex-direction: column;
  overflow: hidden;
  background: #141414;
  color: #e6e6e6;
  font: 12px/16px "Open Sans", "Noto Sans", sans-serif;
}
button {
  margin: 0;
  padding: 0;
  border: 0;
  background: none;
  color: inherit;
  font: inherit;
}
input { font: inherit; color: inherit; }
input[type="search"] { appearance: none; border: 0; background: none; padding: 0; outline: 0; min-width: 0; flex: 1; }
h2, h3, h4, ul { margin: 0; padding: 0; font: inherit; list-style: none; }
svg { display: block; overflow: visible; }
.defs { position: absolute; width: 0; height: 0; }

/* Title bar */
.titlebar {
  display: grid;
  grid-template-columns: 555fr 416fr 395fr;
  height: 36px;
  flex: none;
}
.quick { display: flex; align-items: center; padding-left: 18px; gap: 16px; }
.docname { margin: 0 -12px 0 -1px; padding-top: 5px; white-space: nowrap; color: #e0e0e0; }
.topsearch {
  display: flex;
  align-items: center;
  gap: 11px;
  height: 25px;
  margin-top: 5px;
  padding-left: 18px;
  border-radius: 2px;
  background: #1e1e1e;
  font-size: 14px;
}
.topsearch input::placeholder { color: #c4c4c4; }
.winctl { display: flex; align-items: center; justify-content: flex-end; }
.signin { color: #d8d8d8; text-decoration: none; margin-right: 11px; padding-top: 2px; white-space: nowrap; }
.avatar { margin-right: 15px; }
.win { width: 46px; display: flex; justify-content: center; padding-top: 2px; }

/* Menu tabs */
.menu {
  display: flex;
  align-items: center;
  gap: 24px;
  height: 37px;
  flex: none;
  padding: 0 5px 5px 23px;
  font-size: 14px;
}
.menu button { height: 32px; border-top: 3px solid transparent; border-bottom: 3px solid transparent; line-height: 24px; color: #d8d8d8; }
.menu .file { margin-right: 11px; }
.menu .on { font-weight: 700; color: #fff; border-bottom-color: #2aac94; }
.menu .share {
  display: flex;
  align-items: center;
  gap: 8px;
  width: 87px;
  height: 24px;
  margin-left: auto;
  padding: 0 7px;
  border: 0;
  border-radius: 4px;
  background: #0d6b58;
  color: #b8d4cc;
  font-size: 12px;
}
.share svg:last-child { margin-left: -4px; }

/* Ribbon */
.ribbon {
  display: flex;
  flex: none;
  margin: 0 7px 0 8px;
  height: 104px;
  padding: 4px 0;
  border-radius: 8px;
  background: #292929;
}
.group { display: flex; flex-direction: column; justify-content: space-between; border-right: 1px solid #404040; }
.group h2 { text-align: center; font-size: 10px; font-weight: 600; line-height: 14px; padding-bottom: 3px; color: #f0f0f0; }
.tools { display: flex; padding-top: 6px; }
.tool { display: flex; flex-direction: column; align-items: center; gap: 3px; text-align: center; white-space: nowrap; color: #f0f0f0; }
.tool > svg { width: 32px; height: 32px; flex: none; }
.tool span { width: max-content; }
.tool:disabled, .mini:disabled { color: #5a5a5a; }
.cv { display: inline-block; width: 8px; height: 6px; }
.w38 { width: 38px; } .w42 { width: 42px; } .w46 { width: 46px; } .w51 { width: 51px; } .w52 { width: 52px; }
.w58 { width: 58px; } .w60 { width: 60px; } .w62 { width: 62px; } .w76 { width: 76px; }
.clip { padding: 0 8px; width: 168px; }
.minis { display: flex; flex-direction: column; gap: 11px; padding-left: 4px; }
.clip .tools { padding-top: 5px; }
.mini { display: flex; align-items: center; gap: 5px; white-space: nowrap; }
.mini svg { width: 16px; height: 16px; }
.data { padding: 0 13px 0 6px; }
.queries { padding: 0 8px; }
.insert { padding: 0 12px 0 10px; }
.calc { padding: 0 8px; }
.cop, .pub { min-width: 62px; }
.collapse { margin: auto 9px 6px auto; }

/* Work area */
.work { display: flex; flex: 1; min-height: 0; }
.rail { width: 43px; flex: none; display: flex; flex-direction: column; }
.rail button { height: 42px; padding-right: 4px; display: flex; align-items: center; justify-content: center; border-left: 3px solid transparent; }
.rail .on { height: 41px; border-left-color: #2aac94; }
.dax { font: 700 7px "Open Sans", sans-serif; fill: #ddd; stroke: #141414; stroke-width: 2px; paint-order: stroke; }
.center { flex: 1; min-width: 0; display: flex; flex-direction: column; }
.stage { flex: 1; min-height: 0; display: flex; background: #fff; border-top: 1px solid #333; }
.canvaswrap { flex: 1; min-width: 0; padding: 0 75px 0 74px; display: flex; overflow: hidden; }

.report {
  flex: 1;
  min-width: 0;
  display: flex;
  flex-direction: column;
  gap: 9px;
  color: #252423;
  background:
    radial-gradient(ellipse at 0% 15%, rgba(165, 148, 180, .9), transparent 35%),
    radial-gradient(ellipse at 100% 20%, #ab92f4, transparent 40%),
    radial-gradient(ellipse at 35% 50%, #c2dde2, transparent 30%),
    linear-gradient(165deg, #b48fd0 0%, #b3a4d8 30%, #a8cbd2 60%, #7cb2c2 85%, #8a9fe0 100%);
  box-shadow: 0 0 10px rgba(0, 0, 0, .22);
}
.toprow {
  display: grid;
  grid-template-columns: 110fr 109fr 219fr 304fr;
  column-gap: 8px;
  height: 78px;
  flex: none;
}
.card { display: flex; flex-direction: column; align-items: center; background: #e6e6e6; padding-top: 20px; font-family: Roboto, sans-serif; }
.card strong { font-weight: 400; font-size: 24px; line-height: 30px; }
.card span { font-size: 10px; line-height: 14px; color: #605e5c; }
.slicer { display: grid; gap: 3px 1px; background: #c497c8; padding: 3px 14px 4px 14px; }
.slicer button { background: #1e1e1e; color: #f0f0f0; font-size: 8px; font-weight: 600; line-height: 10px; outline: 1px solid rgba(80, 60, 80, .5); outline-offset: -1px; }
.years { grid-template-columns: repeat(2, 1fr); }
.months { grid-template-columns: repeat(10, 1fr); position: relative; padding-right: 13px; }
.months .next { position: absolute; right: 3px; top: 34px; }

.visuals { flex: 1; min-height: 0; display: grid; grid-template-columns: 140fr 141fr 484fr; }
.bars { display: flex; flex-direction: column; min-height: 0; min-width: 0; }
.bars h3, .ttl { font-family: Roboto, sans-serif; font-size: 10px; line-height: 12px; text-align: center; color: #33302f; fill: #33302f; }
.bars ul { flex: 1; display: flex; flex-direction: column; margin: 14px 0 10px; min-height: 0; }
.bars li { flex: 1; min-height: 0; display: flex; align-items: center; padding-left: var(--lab); font-size: 7px; }
.bars b { flex: none; width: var(--lab); margin-left: calc(var(--lab) * -1); padding-right: 5px; display: flex; justify-content: flex-end; font-family: Roboto, sans-serif; font-weight: 700; white-space: nowrap; }
.bars i { flex: none; height: 20px; background: #118dff; display: flex; align-items: center; justify-content: flex-end; }
.bars em { font-style: normal; font-weight: 700; color: #111; margin-left: 4px; }
.bars i em { margin-right: 4px; }
.rev { --lab: 43px; background: #a0d1ff; }
.qty { --lab: 42px; background: #f4c3ae; }
.faint i { opacity: .45; }
.rightcol { display: grid; grid-template-columns: 252fr 226fr; grid-template-rows: 225fr 160fr; gap: 8px 2px; padding-left: 4px; min-height: 0; }
.trend {
  grid-column: 1 / 3;
  min-height: 0;
  background:
    radial-gradient(ellipse at 10% 100%, #aaa1a1 5%, transparent 75%),
    radial-gradient(ellipse at 85% 0%, #a479ae, transparent 70%),
    linear-gradient(to right, #a9889c, #9184a8);
}
.trend svg { width: 100%; height: 100%; }
.grid { fill: none; stroke: #cdbfc8; stroke-dasharray: 1 2; stroke-width: 1; }
.ax text { font: 700 8px "Open Sans", "Noto Sans", sans-serif; fill: #252423; }
.line { fill: none; stroke: #dc4a5c; stroke-width: 2px; }
.cust { --lab: 79px; background: #c497c8; }
.prod { --lab: 38px; background: #de6a73; }
.cust ul, .prod ul { margin-top: 13px; }
.cust i, .prod i { background: #fff; height: 19px; }
.cust li, .prod li { font-size: 8px; }
.cust em, .prod em { font-size: 10px; }

.filters { width: 34px; flex: none; border-left: 1px solid #aaa; color: #252423; display: flex; flex-direction: column; align-items: center; padding-top: 14px; }
.filters > svg { margin: 22px 0 9px 3px; }
.filters h2 { writing-mode: vertical-rl; font-size: 15px; line-height: 20px; font-weight: 600; }

/* Page tabs */
.pages { display: flex; height: 36px; flex: none; background: #292929; border-bottom: 1px solid #666; }
.pages button { display: flex; align-items: center; justify-content: center; border-bottom: 4px solid transparent; }
.pages .dev { width: 25px; margin: 0 10px 4px; border-bottom-width: 3px; }
.pages .dev + .dev { margin-right: 9px; }
.pages .dev.on { border-bottom-color: #2aac94; }
.pages .arr { width: 22px; }
.pages .pg { border-right: 1px solid #3c3c3c; padding: 0 20px; white-space: nowrap; color: #f0f0f0; }
.pages .pg.on { padding: 0 19px; font-weight: 600; color: #fff; border-left: 1px solid #555; border-bottom-color: #2aac94; }
.pages .add { width: 41px; background: #2aac94; }

/* Visualizations pane */
.viz { width: 188px; flex: none; border: 1px solid #666; border-width: 1px 0 1px 1px; border-top-color: #222; display: flex; flex-direction: column; min-height: 0; color: #fff; }
.vhead { display: flex; align-items: center; justify-content: space-between; padding: 8px 11px 0 8px; }
.vhead h2 { font-size: 15px; line-height: 22px; font-weight: 700; color: #fff; }
.viz h3 { font-weight: 700; font-size: 11px; padding: 8px 8px 0; }
.vtabs { display: flex; gap: 40px; align-items: center; padding: 4px 8px 0; }
.vtabs .on { background: #292929; border-radius: 3px; }
.notch { height: 12px; border-bottom: 1px solid #666; padding: 4px 0 0 17px; }
.vgrid { display: grid; grid-template-columns: repeat(6, 29px); grid-auto-rows: 29px; padding: 8px 0 0 6px; height: 245px; flex: none; border-bottom: 1px solid #ddd; }
.vgrid button { display: flex; align-items: center; justify-content: center; }
.vgrid svg { width: 19px; height: 19px; }
.a { fill: none; stroke: #c8c8c8; stroke-width: 1.200px; }
.b { fill: #0f64b4; stroke: #4ea3e0; stroke-width: 1px; }
.g { fill: #484848; stroke: #8c8c8c; stroke-width: 1px; }
.bl { fill: none; stroke: #4ea3e0; stroke-width: 1.300px; }
.fr { fill: #222; stroke: #b0b0b0; stroke-width: 1.200px; }
.num { font: 600 8px "Open Sans", sans-serif; fill: #4ea3e0; }
.let { font: 600 16px "Open Sans", sans-serif; fill: #3a90d8; }
.wells { flex: 1; min-height: 0; overflow: hidden; position: relative; margin-bottom: 8px; padding: 10px 6px 0 4px; }
.wells h4 { padding-left: 8px; }
.wells .bold { font-weight: 700; margin: 11px 0 5px; }
.drop { border: 1px dashed #777; height: 30px; padding: 6px 10px; margin-top: 5px; white-space: nowrap; }
.drop.last { background: #000; }
.sw { display: flex; align-items: center; justify-content: space-between; padding: 0 17px 0 8px; height: 27px; position: relative; }
.sw input { appearance: none; margin: 0; width: 33px; height: 17px; border: 1px solid #bbb; border-radius: 9px; background: radial-gradient(circle at 8px 7px, #aaa 4px, transparent 5px); }
.sw input:checked { background: radial-gradient(circle at 23px 7px, #252525 4px, #2aac94 5px); border-color: #2aac94; }
.st { position: absolute; right: 22px; font-size: 9px; color: #a8a8a8; }
.sw input:checked + .st { right: 33px; color: #164f45; }
.scroll { position: absolute; right: 0; top: 2px; width: 6px; height: 138px; border-radius: 3px; background: #666; }

/* Data pane */
.fields { width: 187px; flex: none; border: 1px solid #666; border-width: 1px 0 1px 1px; border-top-color: #222; }
.fields .vhead { padding-right: 10px; }
.fsearch { display: flex; align-items: center; gap: 7px; height: 25px; margin: 16px 3px 0 4px; padding: 0 12px; border: 1px solid #666; border-bottom-color: #999; border-radius: 4px; background: #1f1f1f; font-size: 14px; }
.fsearch input::placeholder { color: #999; }
.tree { padding: 9px 0 0 16px; }
.tree button { display: flex; align-items: center; height: 25px; white-space: nowrap; color: #f4f4f4; }
.tc { width: 6px; height: 10px; margin-right: 8px; fill: none; stroke: #ddd; stroke-width: 1.500px; }
.ti { width: 14px; height: 14px; margin-right: 5px; }

/* Status bar */
.status { display: flex; align-items: center; justify-content: space-between; height: 25px; flex: none; padding: 1px 18px 0 4px; border-bottom: 1px solid #000; color: #d8d8d8; }
.zoom { display: flex; align-items: center; gap: 6px; }
.zoom button { font-weight: 700; font-size: 14px; }
.pct { margin-left: 6px; }
.fit { margin-left: 16px; }
.zoom input {
  appearance: none;
  width: 104px;
  height: 14px;
  margin: 0;
  background:
    linear-gradient(#ccc, #ccc) 50% 50% / 1px 6px no-repeat,
    linear-gradient(#ccc, #ccc) 50% 50% / 100% 1px no-repeat;
}
.zoom input::-webkit-slider-thumb { appearance: none; width: 4px; height: 12px; background: #d8d8d8; }
```
